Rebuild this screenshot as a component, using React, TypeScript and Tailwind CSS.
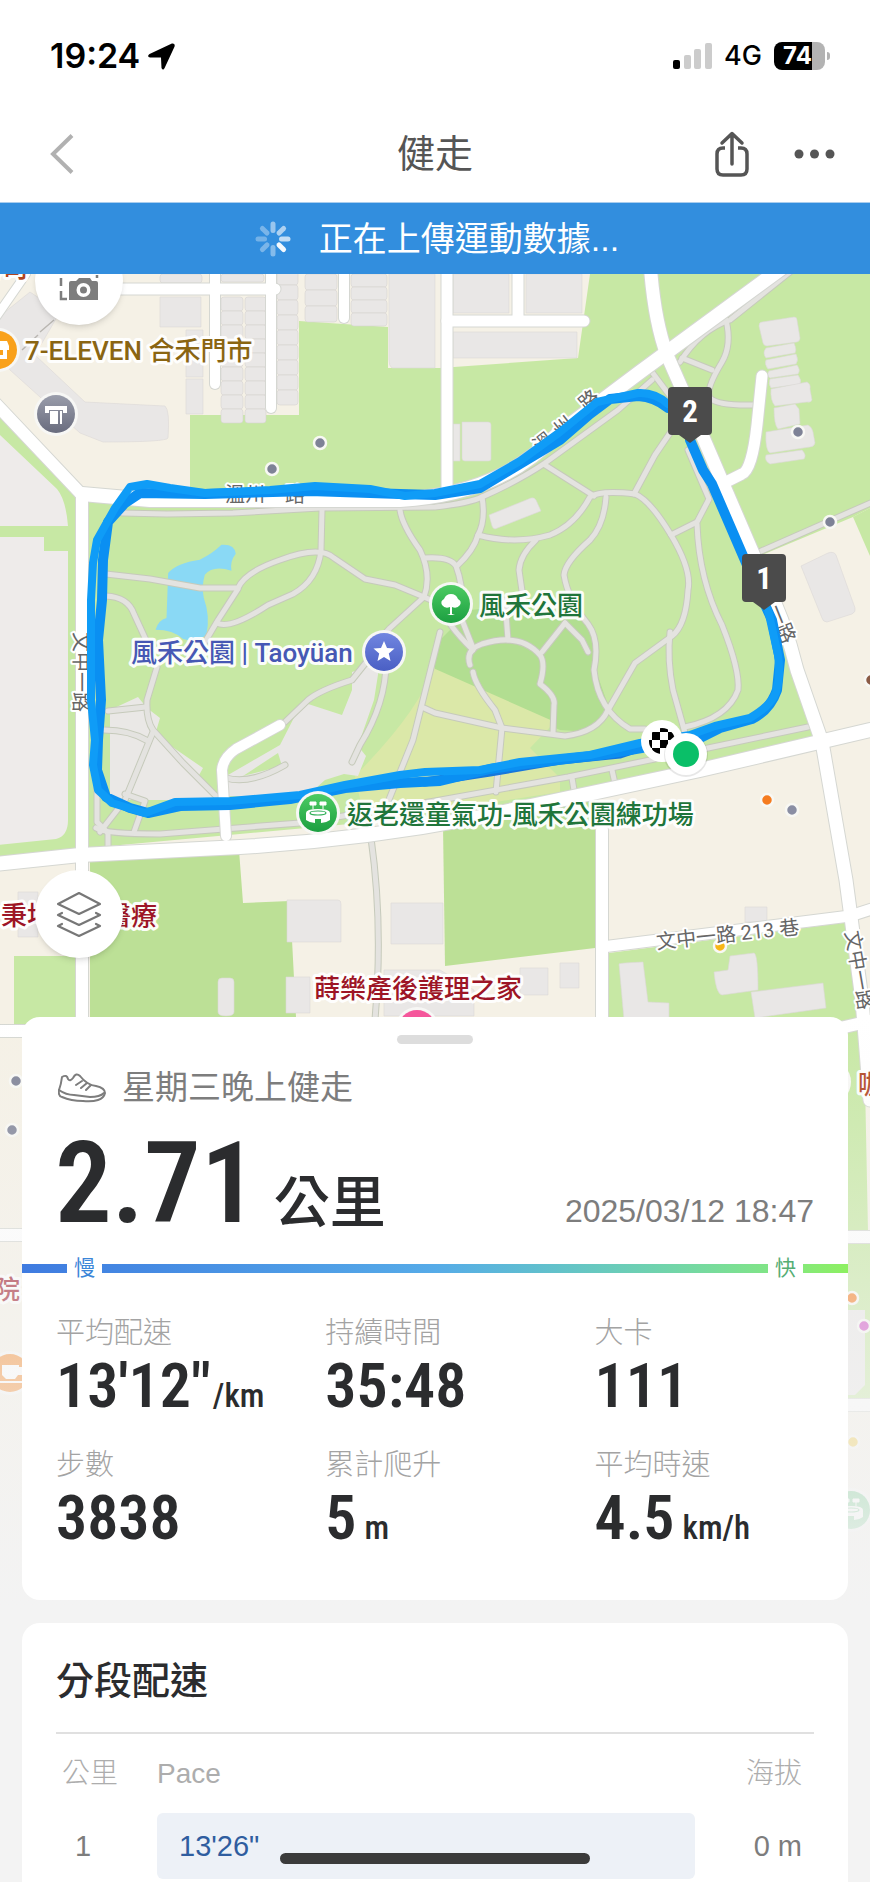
import type { ReactNode } from "react";

const UI = "font-['Liberation_Sans','Noto_Sans_CJK_TC',sans-serif]";
const NARROW = "font-['Roboto_Condensed','Noto_Sans_CJK_TC',sans-serif]";
const ROUNDED = "font-['Inter','Noto_Sans_CJK_TC',sans-serif]";
const MAP_FONT = "font-['Roboto','Noto_Sans_CJK_TC',sans-serif]";

interface Stat {
  label: string;
  value: string;
  unit?: string;
  tight?: boolean;
}

const STATS: Stat[] = [
  { label: "平均配速", value: "13'12\"", unit: "/km", tight: true },
  { label: "持續時間", value: "35:48" },
  { label: "大卡", value: "111" },
  { label: "步數", value: "3838" },
  { label: "累計爬升", value: "5", unit: "m" },
  { label: "平均時速", value: "4.5", unit: "km/h" },
];

const SPLITS = [{ km: 1, pace: "13'26\"", elevation: "0 m", ratio: 100 }];

// ---- map data ----

const ROADS: { d: string; w: number }[] = [
  { d: "M120 289H275", w: 11 },
  { d: "M215 270V384", w: 10 },
  { d: "M271 270V408", w: 10 },
  { d: "M344 270V318", w: 10 },
  { d: "M518 270V320", w: 11 },
  { d: "M447 321H584", w: 11 },
  { d: "M447 270V490", w: 11 },
  { d: "M762 376L757 425Q752 470 742 474L722 484", w: 11 },
  { d: "M-6 320L26 274", w: 8 },
  { d: "M-6 402L82 495V1450", w: 12 },
  { d: "M82 494L150 500H400Q460 496 500 476Q530 462 560 432L640 372L790 262", w: 14 },
  { d: "M650 262Q654 320 667 355L700 430L760 570Q785 620 797 670L822 742L846 880L862 1000L870 1100", w: 13 },
  { d: "M280 725L236 749Q223 758 222 770L226 836", w: 10 },
  { d: "M-5 864L80 855L240 847Q360 840 480 817L700 770L870 730", w: 14 },
  { d: "M602 830V1030", w: 12 },
  { d: "M602 947L850 916L875 908", w: 11 },
  { d: "M-5 1031H30", w: 12 },
  { d: "M-5 1235H30", w: 12 },
  { d: "M840 1028L875 1020", w: 12 },
  { d: "M840 1237H875", w: 12 },
  { d: "M840 1405H875", w: 12 },
];

const PATHS = [
  "M122 513L167 514L233 513L320 508L435 507Q470 503 482 497Q520 480 545 463L618 410L652 380",
  "M322 510L321 550Q318 580 293 594L268 605Q230 630 217 623",
  "M106 574L150 579L200 588H238Q245 572 280 560Q320 545 334 558L365 579L395 585L424 597L440 604",
  "M238 589L218 620L205 642",
  "M400 510Q402 525 420 550Q432 575 424 597L390 628L372 648",
  "M424 558Q450 556 456 566Q463 585 462 605",
  "M106 596Q128 597 134 614L146 640",
  "M157 667L147 700Q146 720 153 730L183 763L217 797",
  "M108 711L146 707",
  "M104 730Q130 730 148 741",
  "M153 732L125 800L100 832",
  "M125 794L145 801L134 832",
  "M97 780V822L108 833",
  "M482 497Q486 520 478 535Q474 550 457 566",
  "M478 535Q515 545 550 535Q575 525 590 497Q600 490 635 494Q650 500 671 535Q692 570 688 590Q686 625 672 636L635 663L608 710Q598 732 565 736L502 728L435 713L424 708",
  "M545 465L594 496",
  "M634 494L655 455L672 430",
  "M606 497Q604 525 590 540Q565 562 564 575Q568 600 588 624Q600 640 594 670Q598 710 630 729H645",
  "M536 540Q520 555 519 570L524 605",
  "M671 535L697 522L709 499L688 450",
  "M697 524Q699 580 722 625Q740 670 738 690Q728 718 685 727",
  "M670 632Q667 660 673 690L687 740",
  "M440 605Q447 625 473 650",
  "M462 620L473 648",
  "M470 665Q465 650 482 644Q520 632 540 655Q546 663 540 684Q556 696 554 705L553 733",
  "M473 672Q475 685 495 710L502 728L496 792",
  "M565 623L542 652",
  "M565 623L582 640L588 652",
  "M505 600L508 640",
  "M440 632L413 740L388 802",
  "M372 655L352 680Q320 690 308 700L285 722",
  "M386 655Q388 700 360 745L352 762",
  "M226 778Q250 785 285 765",
  "M96 828Q105 834 160 834L300 823L435 801L568 777L708 748L808 727",
  "M108 834V850",
  "M572 778L575 796",
  "M612 770L616 788",
  "M652 372L670 396",
  "M795 268L730 320Q700 330 680 362",
  "M726 320Q732 345 722 362Q705 390 710 398Q718 406 755 405",
  "M682 358L712 370",
  "M750 556L875 501",
  "M371 838Q384 930 374 1030",
];

const BUILDINGS = [
  "M-5 320L30 292L60 312L35 355L85 402L165 406Q170 410 168 438Q167 442 103 442L80 433L10 370L-5 345Z",
  "M160 297H201V327H160Z",
  "M186 330H203V377H186Z M186 379H203V414H186Z",
  "M389 274H435V368H392Q389 366 389 360Z",
  "M453 274H509V313H453Z M526 274H582V313H526Z",
  "M453 332H577V358H453Z",
  "M453 424H460V461H453Z M462 422H488Q491 422 491 425V459Q491 461 488 461H465Q462 461 462 458Z",
  "M489 515L531 498Q534 497 536 500L541 511L495 529Q493 529 492 526Z",
  "M762 322L794 317Q797 317 797 320L800 338Q800 341 797 342L767 346Q764 346 763 343L759 326Q759 322 762 322Z",
  "M766 348L794 343Q797 350 795 353L766 358Q762 353 766 348Z",
  "M766 360L796 354Q799 360 796 364L768 369Q764 364 766 360Z",
  "M769 371L797 365Q801 370 798 374L770 378Q766 375 769 371Z",
  "M770 379L798 375Q802 380 800 384L771 388Q768 384 770 379Z",
  "M771 389L807 382Q811 384 810 389L812 400Q811 403 807 402L775 406Q770 400 771 389Z",
  "M774 408L795 404L799 409L800 424L778 429Q774 425 774 408Z",
  "M766 432L808 425Q812 427 813 432L815 443Q814 447 810 447L770 453Q765 450 766 432Z",
  "M766 455L802 450Q807 455 804 459L770 464Q764 461 766 455Z",
  "M801 566L828 553Q834 551 836 555L855 608Q856 612 852 614L827 622Q823 622 822 618Z",
  "M287 900H338Q341 900 341 904V942H287Z M391 903H443V944H391Z",
  "M218 982Q218 978 222 978H230Q234 978 234 982V1012Q234 1016 226 1016Q218 1016 218 1012Z",
  "M286 977H310V1013H286Z",
  "M384 970H440L474 990V1016H384Z M520 968H548V995H520Z M560 963H579V988H560Z",
  "M619 964Q619 963 643 962L648 1002L669 1003V1020H624Z",
  "M714 972L728 970L730 956L754 953Q758 954 758 990L722 995Q716 994 714 972Z",
  "M751 992L823 983L826 1008L755 1018Z",
  "M745 907H767V922H745Z M18 892H38V937H18Z",
];

const STRAND_A =
  "M668 404Q655 392 638 393L597 402L560 432L520 461L480 484L435 493L405 496L370 489L315 486L270 490L205 493L170 488L147 484L130 487L115 508L97 540L93 563L91 600V700L95 740L93 765L98 790L112 803L145 813L175 802L230 801L300 795L345 785L400 775L425 772L480 770L520 762L590 755L640 743L690 735L715 726L750 718Q772 705 776 692Q781 675 778 655L768 610";
const STRAND_B =
  "M668 408Q655 397 638 396L610 399L590 414L560 440L520 464L480 488L435 495L400 494L310 491L205 494L140 493L125 503L108 522L103 560L102 600L98 640L101 700L98 740L97 770L106 797L130 808L148 813L180 806L230 805L290 799L345 788L400 783L440 781L490 769L525 764L600 755L630 750L700 738L720 728L752 719Q770 710 777 690L780 660L772 620L750 572L712 484L703 470L690 440";

const DOTS: [number, number, string][] = [
  [320, 443, "#7e8296"],
  [272, 469, "#7e8296"],
  [798, 432, "#7e8296"],
  [830, 522, "#7e8296"],
  [767, 800, "#f57c20"],
  [792, 810, "#8a8ea3"],
  [720, 946, "#f8b617"],
  [16, 1081, "#7e8296"],
  [12, 1130, "#7e8296"],
  [852, 1298, "#f57c20"],
  [864, 1326, "#cf4ec4"],
  [853, 1442, "#efc52f"],
  [871, 680, "#8a5a44"],
];

interface PlaceProps {
  x: number;
  y: number;
  fill: string;
  children: ReactNode;
}

function Place({ x, y, fill, children }: PlaceProps) {
  return (
    <text
      x={x}
      y={y}
      fill={fill}
      stroke="#fffffff0"
      strokeWidth="6"
      strokeLinejoin="round"
      className="text-[26px] font-medium [paint-order:stroke]"
    >
      {children}
    </text>
  );
}

function RoadName({ x, y, rotate = 0, children }: { x: number; y: number; rotate?: number; children: ReactNode }) {
  return (
    <text
      transform={`translate(${x} ${y}) rotate(${rotate})`}
      fill="#666666"
      stroke="#ffffff"
      strokeWidth="4"
      strokeLinejoin="round"
      className="text-[20px] [paint-order:stroke]"
    >
      {children}
    </text>
  );
}

function KmMarker({ x, y, label }: { x: number; y: number; label: string }) {
  return (
    <g transform={`translate(${x} ${y})`}>
      <path d="M-18 -55H18Q22 -55 22 -51V-11Q22 -7 18 -7H11L0 1L-11 -7H-18Q-22 -7 -22 -11V-51Q-22 -55 -18 -55Z" fill="#4b4b4b" />
      <text y="-20" textAnchor="middle" fill="#ffffff" className={`text-[31px] font-bold ${NARROW}`}>
        {label}
      </text>
    </g>
  );
}

function Pin({ x, y, fill, children }: { x: number; y: number; fill: string; children?: ReactNode }) {
  return (
    <g transform={`translate(${x} ${y})`}>
      <circle r="22" fill="#f7f7f5" />
      <circle r="19" fill={fill} />
      {children}
    </g>
  );
}

/** 一排一格一格的透天厝 */
function Houses({ x, y, w, h, count }: { x: number; y: number; w: number; h: number; count: number }) {
  return (
    <>
      {Array.from({ length: count }, (_, i) => (
        <rect key={i} x={x} y={y + i * h} width={w} height={h} rx="3" fill="#e9e7e6" stroke="#d6d4d2" strokeWidth="0.6" />
      ))}
    </>
  );
}

function StadiumGlyph() {
  return (
    <g>
      <path d="M-12 0Q-12 -4 0 -4Q12 -4 12 0V7Q8 10 3 10V6H-3V10Q-8 10 -12 7Z" fill="#ffffff" />
      <ellipse cy="0" rx="8" ry="2" fill="none" stroke="#2fae55" strokeWidth="1.2" />
      <path d="M-8 -11H-2V-8H-8ZM2 -11H8V-8H2ZM-5 -8V-4M5 -8V-4" fill="#ffffff" stroke="#ffffff" />
    </g>
  );
}

function RouteMap() {
  return (
    <svg
      viewBox="0 274 870 1336"
      preserveAspectRatio="xMidYMin slice"
      className={`absolute inset-x-0 top-0 h-[1336px] w-full ${MAP_FONT}`}
      role="img"
      aria-label="健走路線地圖"
    >
      <defs>
        <linearGradient id="fade" x1="0" y1="0" x2="0" y2="1">
          <stop offset="0" stopColor="#f3f3f3" stopOpacity="0" />
          <stop offset="0.9" stopColor="#f3f3f3" stopOpacity="0.92" />
          <stop offset="1" stopColor="#f3f3f3" />
        </linearGradient>
        <linearGradient id="pinGreen" x1="0" y1="0" x2="0" y2="1">
          <stop offset="0" stopColor="#4ccb62" />
          <stop offset="1" stopColor="#1c9f41" />
        </linearGradient>
        <linearGradient id="pinBlue" x1="0" y1="0" x2="0" y2="1">
          <stop offset="0" stopColor="#7186e0" />
          <stop offset="1" stopColor="#4a5fc4" />
        </linearGradient>
        <linearGradient id="pinGray" x1="0" y1="0" x2="0" y2="1">
          <stop offset="0" stopColor="#9a9dab" />
          <stop offset="1" stopColor="#696c7e" />
        </linearGradient>
        <pattern id="checker" x="-4" y="-4" width="16" height="16" patternUnits="userSpaceOnUse">
          <rect width="16" height="16" fill="#ffffff" />
          <rect width="8" height="8" fill="#000000" />
          <rect x="8" y="8" width="8" height="8" fill="#000000" />
        </pattern>
      </defs>

      {/* land */}
      <rect y="274" width="870" height="1336" fill="#f5f1e6" />
      <path d="M190 415H299V321L388 327V368H440L578 358L590 274H870V508L853 517L745 562L797 670L815 742L480 812L88 848V498L190 490Z" fill="#c7e8a4" />
      <path d="M853 517L870 556V508Z" fill="#c7e8a4" />
      <path d="M-2 415L76 495V850L-2 858Z" fill="#c7e8a4" />
      <path d="M-2 433L57 489Q66 500 68 526H-2ZM-2 537H44V551H68V820Q68 836 56 839L-2 845Z" fill="#eeebea" />
      <path d="M435 645L470 610Q560 600 588 624Q604 645 594 665L608 705L590 732L560 730L435 674Z" fill="#b2de91" />
      <path d="M355 776Q420 710 433 668L555 722L530 748L560 778V792L365 822Z" fill="#dbe8a8" />
      <path d="M110 710L138 697L147 708L160 718L155 735L203 768L198 777L222 800H110Z" fill="#eae8e6" />
      <path d="M302 702L342 715L352 690V672L380 662L374 700L358 746L366 756L358 776L344 774L325 780L305 798L226 796L228 775L280 745Z" fill="#e9e7e6" />
      <path d="M243 776L278 753L282 766Z" fill="#c7e8a4" />
      <path d="M90 860L239 850L243 903L290 901L296 1017H90Z" fill="#bce096" />
      <path d="M443 825L595 800V948L445 966Z" fill="#bce096" />
      <path d="M609 953L850 922L866 1040H609Z" fill="#c7e8a4" />
      <path d="M14 956H76V1026H14Z" fill="#c7e8a4" />
      <path d="M840 1032H864L868 1232H840ZM840 1242H870V1400H840Z" fill="#c7e8a4" />
      <path d="M840 1310H865V1385L855 1395H840Z" fill="#e9e7e6" />
      <path
        transform="translate(0 270) scale(0.333)"
        d="M505 910Q530 880 600 870Q640 850 665 825Q705 822 708 852Q690 875 695 903Q640 885 615 915Q605 950 612 985Q632 1040 620 1095Q590 1120 550 1108Q520 1080 467 1080Q475 1052 500 1045Z"
        fill="#8ad9f5"
      />

      {/* buildings */}
      <g fill="#e9e7e6" stroke="#dbd9d6" strokeWidth="0.6">
        {BUILDINGS.map((d) => (
          <path key={d} d={d} />
        ))}
      </g>
      <Houses x={160} y={274} w={42} h={9} count={1} />
      <Houses x={221} y={274} w={43} h={8} count={1} />
      <Houses x={221} y={297} w={22} h={14} count={9} />
      <Houses x={245} y={297} w={21} h={14} count={9} />
      <Houses x={277} y={270} w={21} h={15} count={9} />
      <Houses x={305} y={274} w={32} h={16} count={3} />
      <Houses x={351} y={274} w={36} h={13} count={4} />
      <path d="M40 332L54 320M22 350L38 335" stroke="#b9b6b1" strokeWidth="1.4" />

      {/* footpaths and roads */}
      <g fill="none" strokeLinecap="round" strokeLinejoin="round">
        {PATHS.map((d) => (
          <path key={d} d={d} stroke="#c6cabb" strokeWidth="7" />
        ))}
        {PATHS.map((d) => (
          <path key={d} d={d} stroke="#e4e3e0" strokeWidth="5" />
        ))}
        {ROADS.map((r) => (
          <path key={r.d} d={r.d} stroke="#d5d7d2" strokeWidth={r.w + 2} />
        ))}
        {ROADS.map((r) => (
          <path key={r.d} d={r.d} stroke="#ffffff" strokeWidth={r.w} />
        ))}
      </g>

      <RoadName x={225} y={502}>溫州一路</RoadName>
      <RoadName x={540} y={454} rotate={-38}>溫 州</RoadName>
      <RoadName x={586} y={412} rotate={-40}>路</RoadName>
      <RoadName x={74} y={632} rotate={90}>文中一路</RoadName>
      <RoadName x={768} y={608} rotate={68}>一路</RoadName>

      {/* recorded track */}
      <g fill="none" strokeLinecap="round" strokeLinejoin="round">
        <path d="M425 782L490 772L560 760L620 754L650 744" stroke="#1677dc" strokeWidth="9" />
        <path d={STRAND_B} stroke="#0a8ff2" strokeWidth="10" />
        <path d={STRAND_A} stroke="#0f9cf7" strokeWidth="8" />
      </g>

      {DOTS.map(([x, y, fill]) => (
        <circle key={`${x}-${y}`} cx={x} cy={y} r="6" fill={fill} stroke="#f8f8f4" strokeWidth="2.5" />
      ))}

      <Pin x={-2} y={350} fill="#f9a11b">
        <path d="M0 -9H9L11 -4V0H9V9H0V5H5V0H0Z" fill="#ffffff" />
      </Pin>
      <Pin x={56} y={414} fill="url(#pinGray)">
        <path d="M-11 -8H11V-1H7V-4H-7V-1H-11ZM-6 -3H2V10H-6ZM4 -3H6V10H4Z" fill="#ffffff" />
      </Pin>
      <Pin x={451} y={604} fill="url(#pinGreen)">
        <path d="M-1 10L-1 3Q-6 5 -9 1Q-11 -3 -7 -5Q-5 -10 0 -10Q5 -10 7 -5Q11 -3 9 1Q6 5 1 3V10L4 11H-4Z" fill="#ffffff" />
      </Pin>
      <Pin x={384} y={652} fill="url(#pinBlue)">
        <path d="M0 -11L3 -4L10.500 -3.500L4.800 1.500L6.500 9L0 5L-6.500 9L-4.800 1.500L-10.500 -3.500L-3 -4Z" fill="#ffffff" />
      </Pin>
      <Pin x={318} y={813} fill="url(#pinGreen)">
        <StadiumGlyph />
      </Pin>
      <Pin x={417} y={1029} fill="#f5569b" />
      <Pin x={829} y={1082} fill="#f57c20" />
      <Pin x={10} y={1373} fill="#f58a2c">
        <path d="M-8 -8H9V-6H13V2H8L5 6H-4L-8 2ZM-10 8H12V10H-10Z" fill="#ffffff" />
      </Pin>
      <Pin x={851} y={1510} fill="#34b45a">
        <StadiumGlyph />
      </Pin>

      <Place x={-24} y={277} fill="#b0441f">壽司</Place>
      <Place x={25} y={360} fill="#8a6512">7-ELEVEN 合禾門市</Place>
      <Place x={479} y={615} fill="#20753a">風禾公園</Place>
      <Place x={131} y={662} fill="#4658b4">風禾公園 | Taoyüan</Place>
      <Place x={347} y={824} fill="#20753a">返老還童氣功-風禾公園練功場</Place>
      <Place x={1} y={925} fill="#9d1526">秉坤婦幼醫療</Place>
      <Place x={314} y={998} fill="#9d1526">蒔樂產後護理之家</Place>
      <Place x={-6} y={1299} fill="#9d1526">院</Place>
      <Place x={858} y={1094} fill="#b0441f">咖啡</Place>
      <RoadName x={657} y={949} rotate={-6}>文中一路 213 巷</RoadName>
      <RoadName x={845} y={932} rotate={80}>文中一路</RoadName>

      <KmMarker x={690} y={442} label="2" />
      <KmMarker x={764} y={609} label="1" />

      <circle cx="662" cy="741" r="21" fill="#ffffff" />
      <circle cx="662" cy="741" r="13" fill="url(#checker)" />
      <circle cx="686" cy="755" r="22" fill="#00000018" />
      <circle cx="686" cy="754" r="21" fill="#ffffff" />
      <circle cx="686" cy="754" r="13" fill="#0abf68" />

      <rect y="1017" width="870" height="593" fill="url(#fade)" />
    </svg>
  );
}

function StatusBar() {
  return (
    <div className={`flex h-28 items-center justify-between pr-10 pl-[50px] text-black ${ROUNDED}`}>
      <div className="flex items-center gap-2">
        <span className="text-[34px] leading-10 font-semibold">19:24</span>
        <svg viewBox="0 0 26 26" className="size-[27px]" aria-hidden="true">
          <path d="M23 0.500Q26.500 0 25.500 3.500L16 24Q14.500 27 13 24L12.500 14H2Q-1.500 13 1.500 10.500Z" />
        </svg>
      </div>
      <div className="flex items-center gap-3">
        <svg viewBox="0 0 39 26" className="h-[26px] w-[39px]" aria-hidden="true">
          <rect y="17" width="7" height="9" rx="2" />
          <rect x="11" y="12" width="7" height="14" rx="2" fill="#cccccc" />
          <rect x="21" y="6" width="7" height="20" rx="2" fill="#cccccc" />
          <rect x="32" width="7" height="26" rx="2" fill="#cccccc" />
        </svg>
        <span className="text-[27px] leading-8 font-medium">4G</span>
        <span className="flex items-center gap-0.5">
          <span className="flex h-7 w-[51px] items-center justify-center rounded-lg bg-linear-to-r from-black from-74% to-[#b3b3b3] to-74% pr-1 text-2xl leading-7 font-bold text-white">
            74
          </span>
          <span className="h-2 w-[3px] rounded-r-full bg-[#b3b3b3]" />
        </span>
      </div>
    </div>
  );
}

function NavBar() {
  return (
    <header className="grid h-[90px] grid-cols-[1fr_auto_1fr] items-center px-[35px] pb-1.5 text-[#555555]">
      <button type="button" aria-label="返回" className="justify-self-start pl-[15px]">
        <svg viewBox="0 0 24 40" className="h-10 w-6" fill="none" stroke="#b1b1b1" strokeWidth="4">
          <path d="M22 1.500L3 20L22 38.500" />
        </svg>
      </button>
      <h1 className="text-[38px] leading-[48px] font-normal">健走</h1>
      <div className="flex items-center gap-[45px] justify-self-end">
        <button type="button" aria-label="分享">
          <svg viewBox="0 0 34 46" className="h-[46px] w-[34px]" fill="none" stroke="currentColor" strokeWidth="3.500">
            <path d="M10 17H8Q2 17 2 23V38Q2 44 8 44H26Q32 44 32 38V23Q32 17 26 17H23" />
            <path d="M17 33V3M7 12L17 2.500L27 12" strokeLinecap="round" strokeLinejoin="round" />
          </svg>
        </button>
        <button type="button" aria-label="更多">
          <svg viewBox="0 0 41 10" className="h-2.5 w-[41px]" fill="currentColor">
            <circle cx="5" cy="5" r="4.500" />
            <circle cx="20.500" cy="5" r="4.500" />
            <circle cx="36" cy="5" r="4.500" />
          </svg>
        </button>
      </div>
    </header>
  );
}

const SPOKES = [0.5, 0.6, 0.7, 0.95, 0.4, 0.35, 0.32, 0.35];

function UploadBanner() {
  return (
    <div role="status" className="flex h-[72px] items-center justify-center gap-7 border-t border-[#a9cdee] bg-[#328ede] pl-1 text-white">
      <svg viewBox="-18 -18 36 36" className="size-9" stroke="#ffffff" strokeWidth="5" strokeLinecap="round" aria-hidden="true">
        {SPOKES.map((opacity, i) => (
          <path key={i} d="M0 -8.500V-15" opacity={opacity} transform={`rotate(${i * 45})`} />
        ))}
      </svg>
      <span className="text-[34px] leading-10 font-normal">正在上傳運動數據...</span>
    </div>
  );
}

function MapButton({ label, className, children }: { label: string; className: string; children: ReactNode }) {
  return (
    <button
      type="button"
      aria-label={label}
      className={`absolute left-[35px] flex size-[88px] items-center justify-center rounded-full bg-white shadow-md ${className}`}
    >
      {children}
    </button>
  );
}

function SummaryCard() {
  return (
    <section className="relative mx-[22px] rounded-[18px] bg-white pt-[18px] pb-[49px]">
      <div className="mx-auto h-[9px] w-[76px] rounded-full bg-[#dddddd]" />
      <div className="mt-6 flex items-center gap-4 px-9 text-[#7d7d7d]">
        <svg
          viewBox="0 0 48 30"
          className="h-[30px] w-12"
          fill="none"
          stroke="currentColor"
          strokeWidth="2"
          strokeLinecap="round"
          strokeLinejoin="round"
          aria-hidden="true"
        >
          <path d="M4 4Q9 1 10 6Q12 9 15 5Q18 -1 22 3Q29 12 38 13Q47 15 47 20Q46 25 40 27Q34 29 25 28Q13 28 4 24Q0 23 1 17Q3 12 4 4Z" />
          <path d="M1 17Q8 22 16 22L32 24Q42 24 46 20M18 12L24 8M23 15L29 10M28 17L33 12" />
        </svg>
        <h2 className="text-[33px] leading-10 font-normal">星期三晚上健走</h2>
      </div>
      <div className="mt-2 flex items-baseline justify-between pr-[34px] pl-[33px]">
        <p className="flex items-baseline gap-4 text-[#2b2c2e]">
          <span className={`text-[113px] leading-[136px] font-semibold ${NARROW}`}>2.71</span>
          <span className="text-[56px] leading-[64px] font-medium">公里</span>
        </p>
        <time dateTime="2025-03-12T18:47" className="text-[32px] leading-10 text-[#7d7d7d]">
          2025/03/12 18:47
        </time>
      </div>
      <div className="relative mt-3 h-[9px] bg-linear-to-r from-[#3f7be0] via-[#56abe8] to-[#8df060]">
        <span className="absolute -top-2.5 left-[45px] w-[35px] bg-white text-center text-[21px] leading-7 font-normal text-[#3b86d8]">慢</span>
        <span className="absolute -top-2.5 right-[45px] w-[35px] bg-white text-center text-[21px] leading-7 font-normal text-[#55ae74]">快</span>
      </div>
      <dl className="mt-10 grid grid-cols-[34%_34%_1fr] gap-y-[26px] pl-[34px]">
        {STATS.map((s) => (
          <div key={s.label}>
            <dt className="text-[29px] leading-10 font-light text-[#a3a3a3]">{s.label}</dt>
            <dd className={`flex items-baseline font-semibold text-[#2b2c2e] ${s.tight ? "gap-0.5" : "gap-2"} ${NARROW}`}>
              <span className="text-[62px] leading-[66px]">{s.value}</span>
              {s.unit && <span className="text-[33px] leading-10 font-medium">{s.unit}</span>}
            </dd>
          </div>
        ))}
      </dl>
    </section>
  );
}

function SplitsCard() {
  return (
    <section className="relative mx-[22px] mt-[23px] flex-1 rounded-t-[18px] bg-white px-[34px] pt-[31px]">
      <h2 className="text-[38px] leading-[54px] font-medium text-[#2b2c2e]">分段配速</h2>
      <table className="mt-6 w-full border-t-2 border-[#e0e0e0]">
        <thead>
          <tr className="h-20 text-[28px] leading-9 text-[#adadad]">
            <th className="w-[101px] pl-1.5 text-left font-light">公里</th>
            <th className="text-left font-normal">Pace</th>
            <th className="w-[119px] pr-3 text-right font-light">海拔</th>
          </tr>
        </thead>
        <tbody>
          {SPLITS.map((s) => (
            <tr key={s.km} className="text-[29px] leading-9 text-[#7d7d7d]">
              <td className="pl-[19px]">{s.km}</td>
              <td>
                <div
                  className="flex h-[66px] items-center rounded-md bg-[#edf1f7] pl-[22px] text-[#2f5d9f]"
                  style={{ width: `${s.ratio}%` }}
                >
                  {s.pace}
                </div>
              </td>
              <td className="pr-3 text-right">{s.elevation}</td>
            </tr>
          ))}
        </tbody>
      </table>
    </section>
  );
}

export default function App() {
  return (
    <div className={`flex min-h-screen flex-col bg-[#f3f3f3] ${UI}`}>
      <div className="bg-white">
        <StatusBar />
        <NavBar />
      </div>
      <UploadBanner />
      <main className="relative flex flex-1 flex-col overflow-hidden">
        <RouteMap />
        <div className="relative h-[743px]">
          <MapButton label="地圖截圖" className="-top-[37px]">
            <svg viewBox="0 0 40 40" className="size-10" fill="#7d7d7d">
              <path d="M2 4V12M2 17V25M2 30V38H8M38 4V12M38 14V17" fill="none" stroke="#7d7d7d" strokeWidth="2.500" />
              <path fillRule="evenodd" d="M12 20H17L20 17H31L33 20H37Q39 20 39 22V39H10V22Q10 20 12 20ZM24.500 22A7 7 0 1 0 24.500 36A7 7 0 1 0 24.500 22ZM24.500 25.500A3.500 3.500 0 1 1 24.500 32.500A3.500 3.500 0 1 1 24.500 25.500Z" />
            </svg>
          </MapButton>
          <MapButton label="圖層" className="top-[596px]">
            <svg viewBox="0 0 46 46" className="size-[46px]" fill="none" stroke="#777777" strokeWidth="2.200" strokeLinejoin="round" strokeLinecap="round">
              <path d="M23 2L44 13L23 23L2 13Z" />
              <path d="M6 22L2 24L23 34L44 24L40 22M6 33L2 35L23 45L44 35L40 33" />
            </svg>
          </MapButton>
        </div>
        <SummaryCard />
        <SplitsCard />
      </main>
      <div className="fixed bottom-[18px] left-1/2 h-[11px] w-[310px] -translate-x-1/2 rounded-full bg-[#3b3b3b]" />
    </div>
  );
}
